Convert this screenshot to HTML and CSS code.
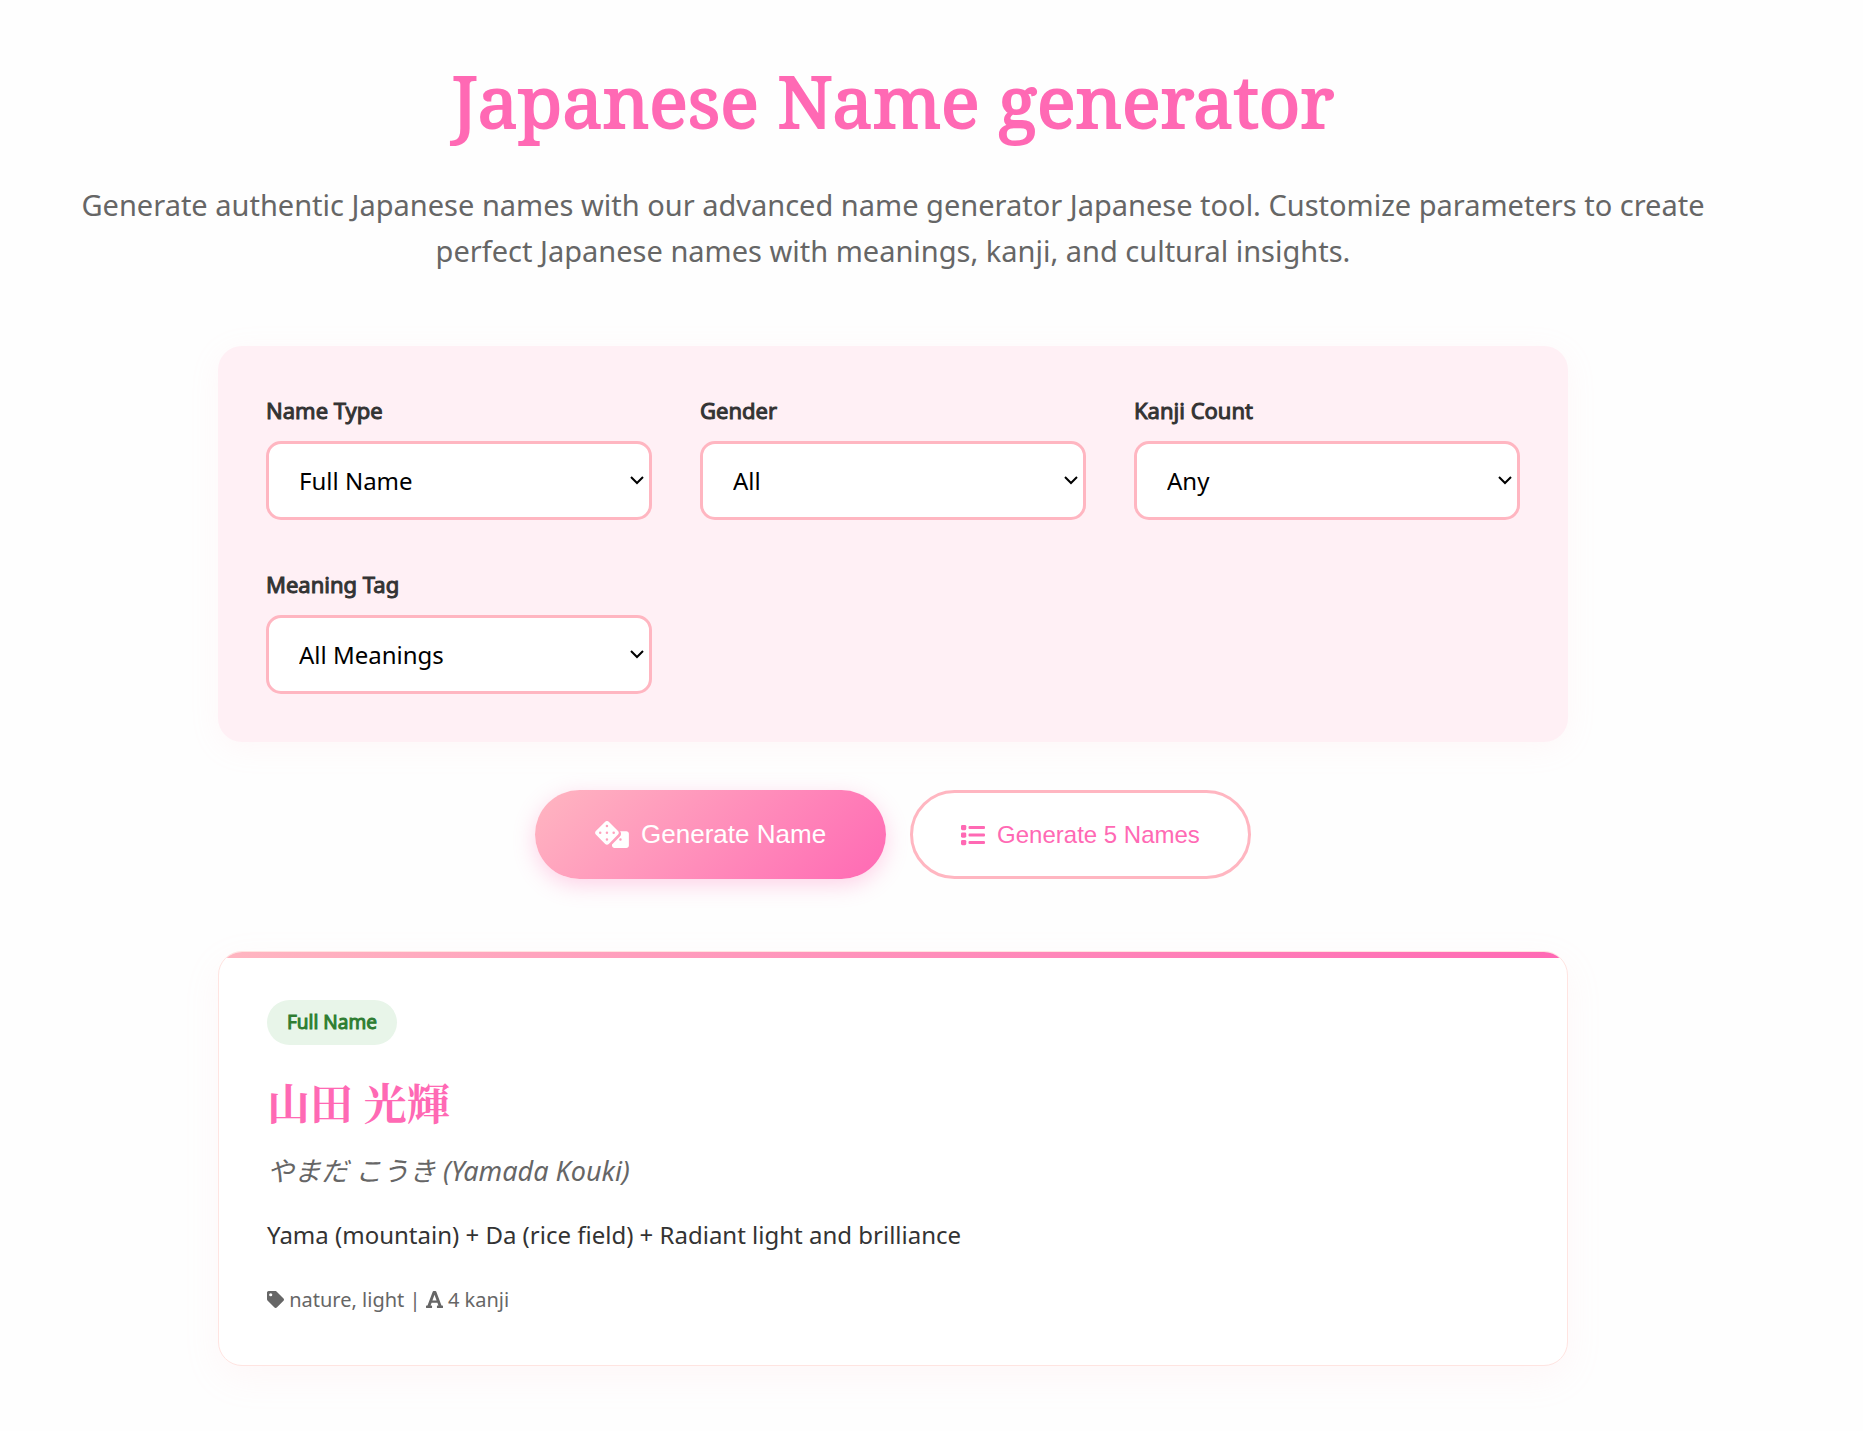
FILE: index.html
```html
<!DOCTYPE html>
<html lang="en">
<head>
  <meta charset="UTF-8" />
  <meta name="viewport" content="width=device-width, initial-scale=1.0" />
  <title>Japanese Name generator</title>
  <link rel="stylesheet" href="styles.css">
</head>
<body>
  <main class="container">
    <header class="hero">
      <h1>Japanese Name generator</h1>
      <p>Generate authentic Japanese names with our advanced name generator Japanese tool. Customize parameters to create perfect Japanese names with meanings, kanji, and cultural insights.</p>
    </header>

    <div class="generator">
      <form class="filters">
        <div class="filter">
          <label for="name-type">Name Type</label>
          <select id="name-type">
            <option>Full Name</option>
          </select>
        </div>
        <div class="filter">
          <label for="gender">Gender</label>
          <select id="gender">
            <option>All</option>
          </select>
        </div>
        <div class="filter">
          <label for="kanji-count">Kanji Count</label>
          <select id="kanji-count">
            <option>Any</option>
          </select>
        </div>
        <div class="filter">
          <label for="meaning-tag">Meaning Tag</label>
          <select id="meaning-tag">
            <option>All Meanings</option>
          </select>
        </div>
      </form>

      <div class="actions">
        <button type="button" class="btn btn-primary">
          <svg class="icon-dice" viewBox="0 0 640 512" aria-hidden="true"><path fill="currentColor" fill-rule="evenodd" d="M592 192H473c26 29 25 74-3 102L320 444v20c0 26 22 48 48 48h224c26 0 48-22 48-48V240c0-26-22-48-48-48zM480 376a24 24 0 1 1 0-48 24 24 0 0 1 0 48zM434 189L259 14c-19-19-49-19-68 0L14 189c-19 19-19 49 0 68l177 177c19 19 49 19 68 0l175-177c19-19 19-49 0-68zM96 248a24 24 0 1 1 0-48 24 24 0 0 1 0 48zm128 128a24 24 0 1 1 0-48 24 24 0 0 1 0 48zm0-128a24 24 0 1 1 0-48 24 24 0 0 1 0 48zm0-128a24 24 0 1 1 0-48 24 24 0 0 1 0 48zm128 128a24 24 0 1 1 0-48 24 24 0 0 1 0 48z"/></svg>
          Generate Name
        </button>
        <button type="button" class="btn btn-secondary">
          <svg class="icon-list" viewBox="0 0 512 512" aria-hidden="true"><g fill="currentColor"><rect x="0" y="40" width="112" height="112" rx="30"/><rect x="0" y="200" width="112" height="112" rx="30"/><rect x="0" y="360" width="112" height="112" rx="30"/><rect x="160" y="64" width="352" height="64" rx="24"/><rect x="160" y="224" width="352" height="64" rx="24"/><rect x="160" y="384" width="352" height="64" rx="24"/></g></svg>
          Generate 5 Names
        </button>
      </div>

      <article class="name-card">
        <span class="badge">Full Name</span>
        <h2 class="kanji" lang="ja">山田 光輝</h2>
        <p class="reading"><span lang="ja">やまだ こうき</span> (Yamada Kouki)</p>
        <p class="meaning">Yama (mountain) + Da (rice field) + Radiant light and brilliance</p>
        <p class="meta">
          <svg viewBox="0 0 512 512" aria-hidden="true"><path fill="currentColor" fill-rule="evenodd" d="M0 252V48C0 22 22 0 48 0h204c13 0 25 5 34 14l212 212c19 19 19 49 0 68L294 498c-19 19-49 19-68 0L14 286c-9-9-14-21-14-34zM112 64a48 48 0 1 0 0 96 48 48 0 0 0 0-96z"/></svg>
          nature, light |
          <svg viewBox="0 0 448 448" aria-hidden="true"><path fill="currentColor" fill-rule="evenodd" d="M432 384h-24L272 18c-4-11-12-18-24-18h-48c-12 0-20 7-24 18L40 384H16c-9 0-16 7-16 16v32c0 9 7 16 16 16h128c9 0 16-7 16-16v-32c0-9-7-16-16-16h-23l26-72h154l26 72h-23c-9 0-16 7-16 16v32c0 9 7 16 16 16h128c9 0 16-7 16-16v-32c0-9-7-16-16-16zM169 252l55-152 55 152z"/></svg>
          4 kanji
        </p>
      </article>
    </div>
  </main>
</body>
</html>
```
FILE: styles.css
```css
* {
  margin: 0;
  padding: 0;
  box-sizing: border-box;
}

body {
  font-family: 'Noto Sans', 'Noto Sans CJK JP', sans-serif;
  background: #fefefe;
  color: #333;
  line-height: 1.6;
}

.container {
  padding: 48px 125px 66px 48px;
}

.hero {
  text-align: center;
  margin-bottom: 72px;
}

.hero h1 {
  font-family: 'Noto Serif', 'DejaVu Serif', serif;
  font-size: 72px;
  font-weight: 400;
  -webkit-text-stroke: 2px currentColor;
  line-height: 104px;
  color: #ff69b4;
  margin-bottom: 30px;
}

.hero p {
  font-size: 29px;
  line-height: 46px;
  color: #666;
}

.generator {
  max-width: 1350px;
  margin: 0 auto;
}

.filters {
  display: grid;
  grid-template-columns: repeat(3, 1fr);
  gap: 48px;
  padding: 48px;
  margin-bottom: 48px;
  background: #fff0f5;
  border-radius: 24px;
  box-shadow: 0 6px 30px rgba(255, 182, 193, 0.1);
}

.filter label {
  display: block;
  font-size: 22px;
  -webkit-text-stroke: 1px currentColor;
  line-height: 33px;
  margin-bottom: 14px;
}

.filter select {
  display: block;
  width: 100%;
  height: 79px;
  padding: 0 30px;
  font-family: inherit;
  font-size: 24px;
  color: #000;
  appearance: none;
  border: 3px solid #ffb6c1;
  border-radius: 15px;
  background: #fff url("data:image/svg+xml,%3Csvg xmlns='http://www.w3.org/2000/svg' viewBox='0 0 14 9'%3E%3Cpath d='M1 1l6 6 6-6' fill='none' stroke='%23000' stroke-width='2'/%3E%3C/svg%3E") no-repeat right 5px center / 14px 9px;
}

.actions {
  display: flex;
  justify-content: center;
  gap: 24px;
  margin-bottom: 72px;
}

.btn {
  display: flex;
  align-items: center;
  gap: 12px;
  height: 89px;
  font-family: 'Liberation Sans', Arial, sans-serif;
  border-radius: 45px;
  cursor: pointer;
}

.btn-primary {
  padding: 0 60px;
  font-size: 26px;
  color: #fff;
  border: none;
  background: linear-gradient(135deg, #ffb6c1, #ff69b4);
  box-shadow: 0 6px 22px rgba(255, 105, 180, 0.3);
}

.btn-secondary {
  padding: 0 48px;
  font-size: 24px;
  color: #ff69b4;
  border: 3px solid #ffb6c1;
  background: #fff;
}

.icon-dice {
  width: 34px;
  height: 27px;
}

.icon-list {
  width: 24px;
  height: 24px;
}

.name-card {
  position: relative;
  overflow: hidden;
  padding: 48px;
  background: #fff;
  border: 1px solid #ffe4e1;
  border-radius: 24px;
  box-shadow: 0 12px 36px rgba(255, 182, 193, 0.1);
}

/* gradient strip along the top edge */
.name-card::before {
  content: '';
  position: absolute;
  top: 0;
  left: 0;
  right: 0;
  height: 6px;
  background: linear-gradient(90deg, #ffb6c1, #ff69b4);
}

.badge {
  display: inline-block;
  padding: 7px 20px;
  margin-bottom: 24px;
  font-size: 19px;
  -webkit-text-stroke: 1px currentColor;
  line-height: 31px;
  color: #2e7d32;
  background: #e8f5e9;
  border-radius: 23px;
}

.kanji {
  font-family: 'Noto Serif CJK JP', 'Noto Serif JP', 'Noto Sans CJK JP', serif;
  font-size: 43px;
  line-height: 65px;
  color: #ff69b4;
  margin-bottom: 16px;
}

.reading {
  font-size: 27px;
  font-style: italic;
  line-height: 42px;
  color: #666;
  margin-bottom: 24px;
}

.meaning {
  font-size: 24px;
  line-height: 38px;
  margin-bottom: 28px;
}

.meta {
  font-size: 20px;
  line-height: 35px;
  color: #666;
}

.meta svg {
  height: 17px;
  vertical-align: -1px;
}
```
